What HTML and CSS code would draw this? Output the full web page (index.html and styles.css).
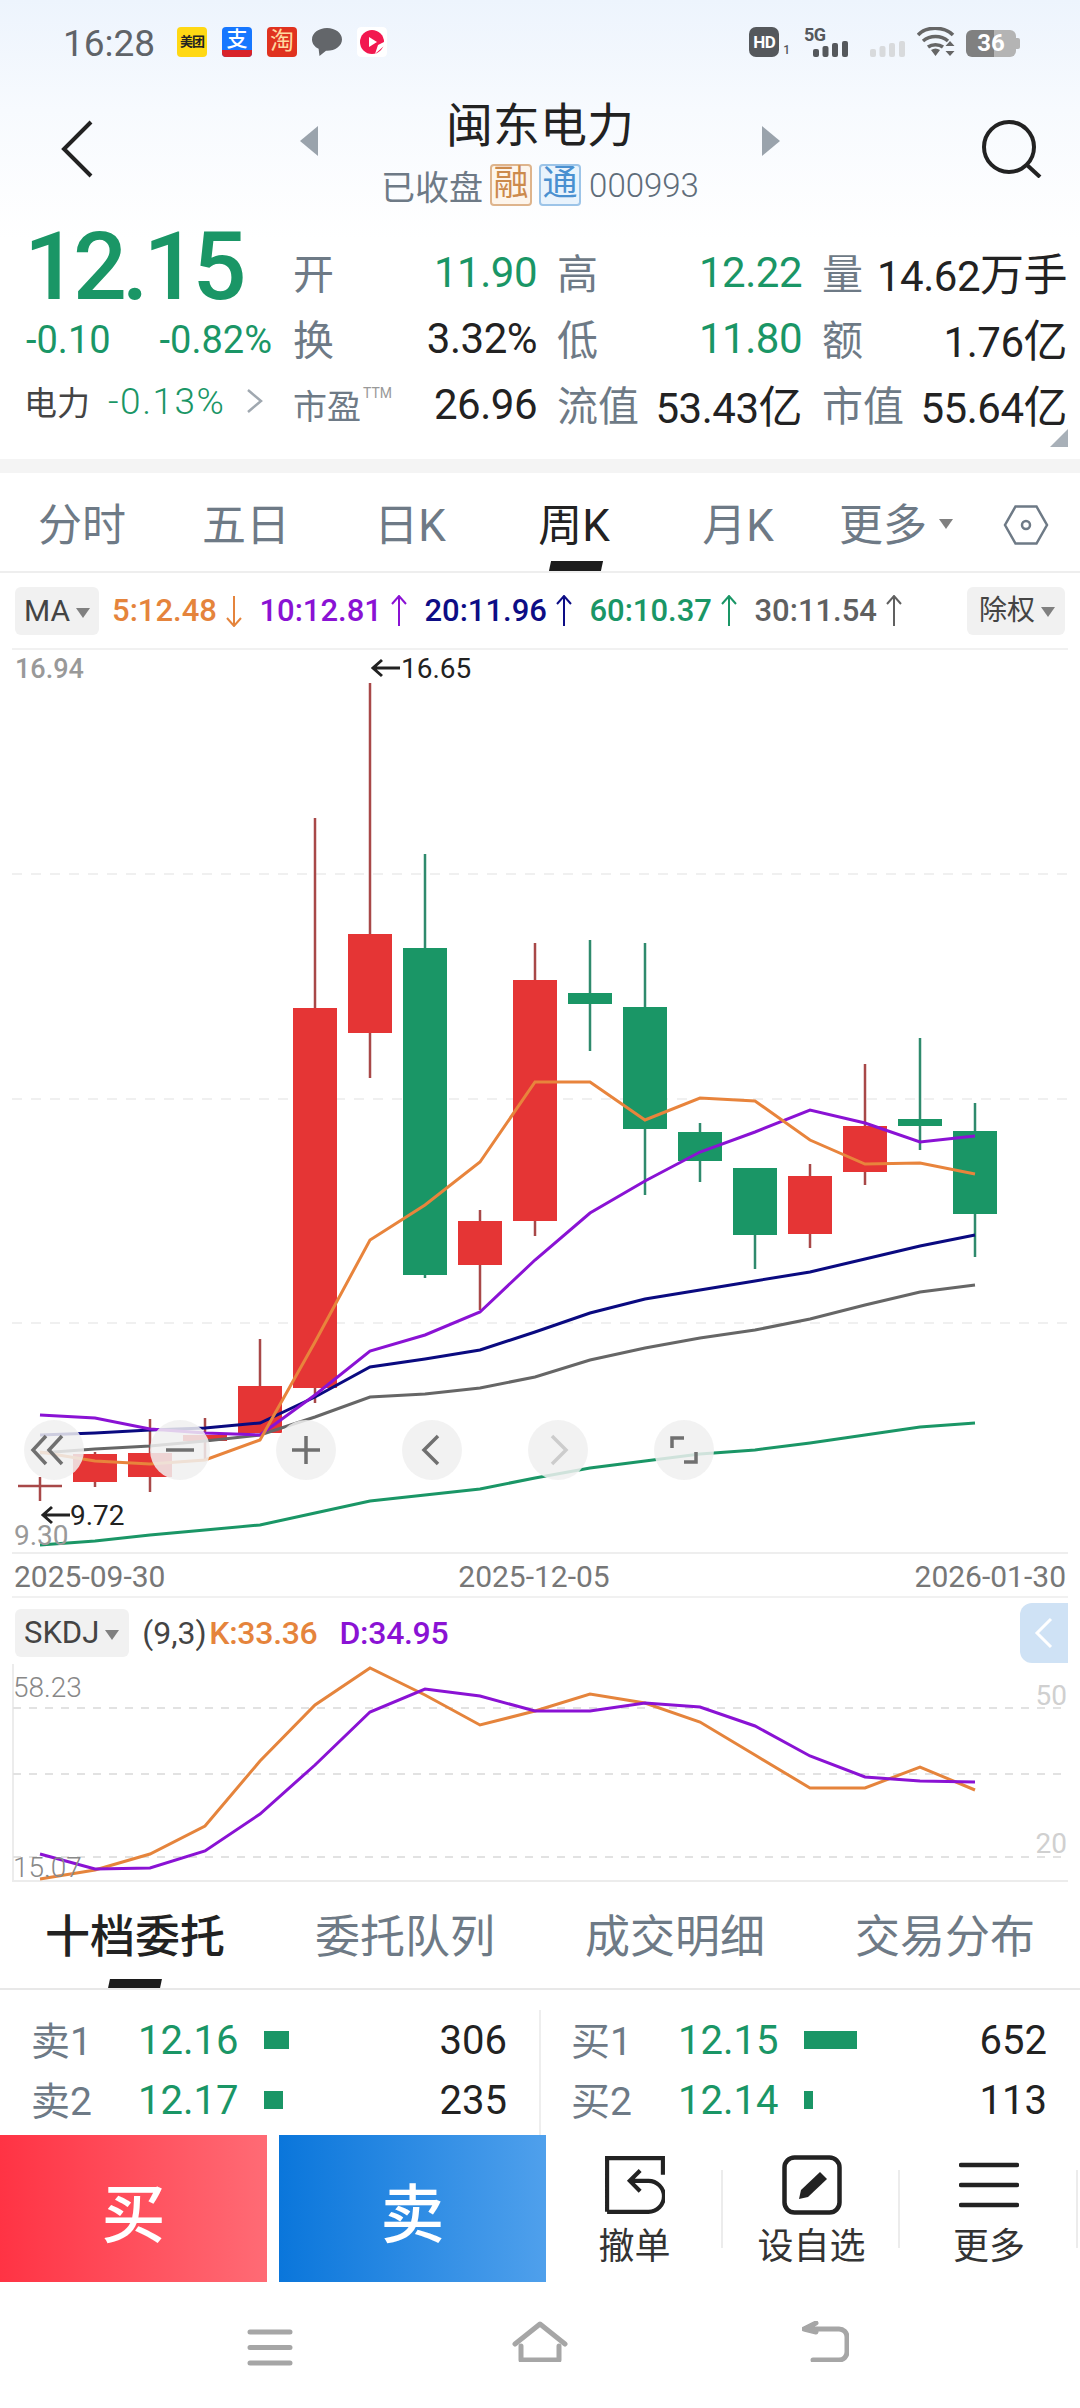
FILE: index.html
```html
<!DOCTYPE html>
<html lang="zh">
<head>
    <meta charset="utf-8">
    <title>闽东电力</title>
    <link rel="stylesheet" href="styles.css">
</head>
<body>
    <div class="page">
        <!-- 顶部行情 -->
        <header class="header">
            <div class="status">
                <span class="time">16:28</span>
                <div class="apps">
                    <span class="app app-meituan">美团</span>
                    <span class="app app-alipay"><b>支</b><i></i></span>
                    <span class="app app-taobao">淘</span>
                    <svg class="app" viewBox="0 0 30 30"><path d="M15 1C6.7 1 0 6 0 12.4c0 4 2.6 7.4 6.6 9.4L7.5 29l6.5-5.3h1C23.3 23.7 30 18.7 30 12.4S23.3 1 15 1z" fill="#63666a"/></svg>
                    <svg class="app" viewBox="0 0 30 30"><rect width="30" height="30" rx="4" fill="#fff"/><circle cx="15" cy="15" r="12" fill="#f2184f"/><path d="M27 15l-6 3-3 9 9-8z" fill="#fff"/><path d="M12 10l8 5-8 5z" fill="#fff"/></svg>
                </div>
                <div class="sys">
                    <span class="hd">HD</span>
                    <span class="sim">1</span>
                    <div class="net">
                        <span class="net-label">5G</span>
                        <svg class="bars" viewBox="0 0 35 16"><rect y="8" width="6" height="8" rx="2"/><rect x="9.5" y="5" width="6" height="11" rx="2"/><rect x="19" y="2" width="6" height="14" rx="2"/><rect x="29" width="6" height="16" rx="2"/></svg>
                    </div>
                    <svg class="bars bars-off" viewBox="0 0 35 16"><rect y="8" width="6" height="8" rx="2"/><rect x="9.5" y="5" width="6" height="11" rx="2"/><rect x="19" y="2" width="6" height="14" rx="2"/><rect x="29" width="6" height="16" rx="2"/></svg>
                    <svg class="wifi" viewBox="0 0 40 30"><path d="M1 8C9-1 27-1 36 8M6 14c7-6 18-6 25 0M11 20c4-3 11-3 15 0" fill="none" stroke="#666" stroke-width="3.5"/><path d="M14 23c3-2 6-2 9 0l-4.5 6zM33 14l4.5 5h-9zM33 29l4.5-5h-9z" fill="#666"/></svg>
                    <div class="battery"><span>36</span></div>
                </div>
            </div>

            <div class="nav">
                <div class="nav-left">
                    <svg class="icon-back" viewBox="0 0 32 58"><path d="M30 2L3 29l27 27" fill="none" stroke="#222" stroke-width="4"/></svg>
                </div>
                <svg class="tri" viewBox="0 0 18 30"><path d="M18 0v30L0 15z"/></svg>
                <div class="title-box">
                    <h1 class="title">闽东电力</h1>
                    <div class="subtitle">
                        <span>已收盘</span>
                        <span class="tag tag-rong">融</span>
                        <span class="tag tag-tong">通</span>
                        <span class="code">000993</span>
                    </div>
                </div>
                <svg class="tri" viewBox="0 0 18 30"><path d="M0 0v30l18-15z"/></svg>
                <div class="nav-right">
                    <svg class="icon-search" viewBox="0 0 60 58"><circle cx="27" cy="27" r="25" fill="none" stroke="#222" stroke-width="4"/><path d="M45 45l13 12" fill="none" stroke="#222" stroke-width="4"/></svg>
                </div>
            </div>

            <div class="quote">
                <div class="price-box">
                    <div class="price">12.15</div>
                    <div class="change"><span>-0.10</span><span>-0.82%</span></div>
                    <div class="sector">
                        <span class="sector-name">电力</span>
                        <span class="sector-pct">-0.13%</span>
                        <svg class="sector-more" viewBox="0 0 17 26"><path d="M2 2l13 11L2 24" fill="none" stroke="#a0a8b0" stroke-width="2.5"/></svg>
                    </div>
                </div>
                <div class="stats">
                    <div class="stat"><span class="lbl">开</span><span class="val green">11.90</span></div>
                    <div class="stat"><span class="lbl">高</span><span class="val green">12.22</span></div>
                    <div class="stat"><span class="lbl">量</span><span class="val">14.62<span class="unit">万手</span></span></div>
                    <div class="stat"><span class="lbl">换</span><span class="val">3.32%</span></div>
                    <div class="stat"><span class="lbl">低</span><span class="val green">11.80</span></div>
                    <div class="stat"><span class="lbl">额</span><span class="val">1.76<span class="unit">亿</span></span></div>
                    <div class="stat"><span class="lbl lbl-small">市盈<sup>TTM</sup></span><span class="val">26.96</span></div>
                    <div class="stat"><span class="lbl">流值</span><span class="val">53.43<span class="unit">亿</span></span></div>
                    <div class="stat"><span class="lbl">市值</span><span class="val">55.64<span class="unit">亿</span></span></div>
                </div>
                <span class="corner"></span>
            </div>
        </header>
        <div class="band"></div>

        <!-- 周期 -->
        <nav class="periods">
            <span class="period">分时</span>
            <span class="period">五日</span>
            <span class="period">日K</span>
            <span class="period active">周K</span>
            <span class="period">月K</span>
            <span class="period period-more">更多<i class="caret caret-tab"></i></span>
            <span class="period period-icon">
                <svg viewBox="0 0 46 42"><path d="M12.5 2.5h21L44 21 33.5 39.5h-21L2 21z" fill="none" stroke="#6e7a86" stroke-width="2.5"/><circle cx="23" cy="21" r="4" fill="none" stroke="#6e7a86" stroke-width="2.5"/></svg>
            </span>
        </nav>

        <!-- 均线 -->
        <div class="ma-row">
            <span class="pick">MA<i class="caret"></i></span>
            <div class="ma-list">
                <span class="ma c-orange">5:12.48<svg viewBox="0 0 18 32"><path d="M9 1v30M2 23l7 8 7-8"/></svg></span>
                <span class="ma c-purple">10:12.81<svg viewBox="0 0 18 32"><path d="M9 31V1M2 9l7-8 7 8"/></svg></span>
                <span class="ma c-navy">20:11.96<svg viewBox="0 0 18 32"><path d="M9 31V1M2 9l7-8 7 8"/></svg></span>
                <span class="ma c-green">60:10.37<svg viewBox="0 0 18 32"><path d="M9 31V1M2 9l7-8 7 8"/></svg></span>
                <span class="ma c-gray">30:11.54<svg viewBox="0 0 18 32"><path d="M9 31V1M2 9l7-8 7 8"/></svg></span>
            </div>
            <span class="pick pick-right">除权<i class="caret"></i></span>
        </div>

        <!-- K线图 -->
        <div class="kline">
            <svg class="kline-svg" viewBox="0 650 1080 902">
                <path class="grid" d="M12 874H1068M12 1099H1068M12 1323H1068"/>
                <path class="wick-up" d="M18 1486H62M40 1477V1501M95 1452V1487M150 1419V1492M205 1418V1460M260 1339V1390M315 818V1403M370 683V1078M480 1210V1310M535 943V1236M810 1164V1248M865 1064V1185"/>
                <path class="wick-down" d="M425 854V1278M590 940V1051M645 943V1195M700 1123V1182M755 1235V1269M920 1038V1150M975 1103V1257"/>
                <g class="up">
                    <rect x="73" y="1454" width="44" height="28"/>
                    <rect x="128" y="1453" width="44" height="24"/>
                    <rect x="183" y="1435" width="44" height="6"/>
                    <rect x="238" y="1386" width="44" height="47"/>
                    <rect x="293" y="1008" width="44" height="380"/>
                    <rect x="348" y="934" width="44" height="99"/>
                    <rect x="458" y="1221" width="44" height="44"/>
                    <rect x="513" y="980" width="44" height="241"/>
                    <rect x="788" y="1176" width="44" height="58"/>
                    <rect x="843" y="1126" width="44" height="46"/>
                </g>
                <g class="down">
                    <rect x="403" y="948" width="44" height="327"/>
                    <rect x="568" y="993" width="44" height="11"/>
                    <rect x="623" y="1007" width="44" height="122"/>
                    <rect x="678" y="1132" width="44" height="29"/>
                    <rect x="733" y="1168" width="44" height="67"/>
                    <rect x="898" y="1119" width="44" height="7"/>
                    <rect x="953" y="1131" width="44" height="83"/>
                </g>
                <polyline class="line s-green" points="40,1545 95,1541 150,1535 205,1530 260,1525 315,1513 370,1501 425,1495 480,1489 535,1478 590,1468 645,1461 700,1454 755,1450 810,1443 865,1435 920,1427 975,1423"/>
                <polyline class="line s-gray" points="40,1453 95,1449 150,1446 205,1441 260,1435 315,1417 370,1397 425,1394 480,1388 535,1377 590,1360 645,1348 700,1338 755,1330 810,1319 865,1305 920,1292 975,1285"/>
                <polyline class="line s-navy" points="40,1435 95,1433 150,1430 205,1428 260,1423 315,1397 370,1367 425,1359 480,1350 535,1332 590,1313 645,1299 700,1290 755,1281 810,1272 865,1259 920,1246 975,1235"/>
                <polyline class="line s-purple" points="40,1415 95,1418 150,1429 205,1433 260,1435 315,1395 370,1351 425,1335 480,1312 535,1260 590,1213 645,1181 700,1152 755,1132 810,1110 865,1123 920,1142 975,1136"/>
                <polyline class="line s-orange" points="40,1452 95,1461 150,1464 205,1460 260,1440 315,1342 370,1240 425,1205 480,1162 535,1082 590,1082 645,1120 700,1098 755,1101 810,1140 865,1164 920,1163 975,1174"/>
                <text class="axis axis-strong" x="15" y="678">16.94</text>
                <text class="axis" x="14" y="1545">9.30</text>
                <path class="mark" d="M400 668H373M382 660l-9 8 9 8M70 1515H43M52 1507l-9 8 9 8"/>
                <text class="peak" x="401" y="678">16.65</text>
                <text class="peak" x="70" y="1525">9.72</text>
            </svg>
            <!-- 缩放按钮 -->
            <div class="zoom-btns">
                <span class="zoom-btn"><svg viewBox="0 0 60 60"><path d="M22 16L9 30l13 14M38 16L25 30l13 14"/></svg></span>
                <span class="zoom-btn"><svg viewBox="0 0 60 60"><path d="M16 30h28"/></svg></span>
                <span class="zoom-btn"><svg viewBox="0 0 60 60"><path d="M16 30h28M30 16v28"/></svg></span>
                <span class="zoom-btn"><svg viewBox="0 0 60 60"><path d="M36 16L22 30l14 14"/></svg></span>
                <span class="zoom-btn zoom-off"><svg viewBox="0 0 60 60"><path d="M24 16l14 14-14 14"/></svg></span>
                <span class="zoom-btn"><svg viewBox="0 0 60 60"><path d="M18 28V18h12M42 32v10H30"/></svg></span>
            </div>
        </div>

        <div class="dates">
            <span>2025-09-30</span>
            <span class="date-mid">2025-12-05</span>
            <span>2026-01-30</span>
        </div>

        <!-- 副图 -->
        <div class="sub-head">
            <span class="pick pick-wide">SKDJ<i class="caret"></i></span>
            <span class="sub-args">(9,3)</span>
            <span class="sub-val c-orange">K:33.36</span>
            <span class="sub-val c-purple sub-d">D:34.95</span>
            <span class="sub-tab"><svg viewBox="0 0 20 32"><path d="M17 2L3 16l14 14" fill="none" stroke="#fff" stroke-width="3"/></svg></span>
        </div>
        <svg class="sub-svg" viewBox="0 1664 1080 224">
            <path class="sub-frame" d="M13 1664V1881H1068"/>
            <path class="sub-grid" d="M13 1708H1068M13 1774H1068M13 1857H1068"/>
            <polyline class="line s-korange" points="40,1879 95,1870 150,1854 205,1826 260,1761 315,1705 370,1668 425,1695 480,1725 535,1711 590,1694 645,1703 700,1722 755,1755 810,1788 865,1788 920,1767 975,1790"/>
            <polyline class="line s-purple" points="40,1854 95,1869 150,1868 205,1851 260,1814 315,1765 370,1712 425,1689 480,1696 535,1711 590,1711 645,1703 700,1707 755,1726 810,1756 865,1777 920,1781 975,1782"/>
            <text class="axis axis-sub" x="13" y="1697">58.23</text>
            <text class="axis axis-sub" x="13" y="1877">15.07</text>
            <text class="axis axis-right" x="1067" y="1705">50</text>
            <text class="axis axis-right" x="1067" y="1853">20</text>
        </svg>

        <!-- 盘口 -->
        <nav class="depth-tabs">
            <span class="depth-tab active">十档委托</span>
            <span class="depth-tab">委托队列</span>
            <span class="depth-tab">成交明细</span>
            <span class="depth-tab">交易分布</span>
        </nav>
        <div class="depth">
            <div class="depth-side">
                <div class="depth-row"><span class="lbl-d">卖1</span><span class="green">12.16</span><span><i class="bar" style="width:25px"></i></span><span class="qty">306</span></div>
                <div class="depth-row"><span class="lbl-d">卖2</span><span class="green">12.17</span><span><i class="bar" style="width:19px"></i></span><span class="qty">235</span></div>
            </div>
            <div class="depth-side depth-right">
                <div class="depth-row"><span class="lbl-d">买1</span><span class="green">12.15</span><span><i class="bar" style="width:53px"></i></span><span class="qty">652</span></div>
                <div class="depth-row"><span class="lbl-d">买2</span><span class="green">12.14</span><span><i class="bar" style="width:9px"></i></span><span class="qty">113</span></div>
            </div>
        </div>

        <!-- 交易按钮 -->
        <div class="trade">
            <button class="btn btn-buy">买</button>
            <button class="btn btn-sell">卖</button>
            <div class="actions">
                <div class="action">
                    <svg viewBox="0 0 58 60"><path d="M2 56V4h54v16M2 56h40a15 15 0 0 0 0-30H25M34 16l-10 10 10 10" fill="none" stroke="#222" stroke-width="4"/></svg>
                    <span>撤单</span>
                </div>
                <div class="action">
                    <svg viewBox="0 0 60 60"><rect x="2.5" y="2.5" width="55" height="55" rx="10" fill="none" stroke="#222" stroke-width="4.5"/><path d="M17 44l2-9 19-18 7 7-19 18z" fill="#222"/></svg>
                    <span>设自选</span>
                </div>
                <div class="action">
                    <svg viewBox="0 0 60 60"><path d="M2 10h56M2 30h56M2 50h56" fill="none" stroke="#222" stroke-width="4.5" stroke-linecap="round"/></svg>
                    <span>更多</span>
                </div>
            </div>
        </div>

        <!-- 系统导航 -->
        <footer class="sysnav">
            <svg class="sys-menu" viewBox="0 0 46 37"><path d="M3 3h40M3 18.5h40M3 34h40"/></svg>
            <svg class="sys-home" viewBox="0 0 56 41"><path d="M3 23L28 3l25 20M9 25v14h38V25"/></svg>
            <svg class="sys-back" viewBox="0 0 47 41"><path d="M2 8h35a8 8 0 0 1 8 8v15a8 8 0 0 1-8 8H11M14 2L2 8l12 3"/></svg>
        </footer>
    </div>
</body>
</html>
```

FILE: styles.css
```css
* {
    box-sizing: border-box;
}

body {
    margin: 0;
    background-color: #fff;
    font-family: Roboto, "Noto Sans CJK SC", sans-serif;
    color: #222;
}

.page {
    width: 1080px;
    height: 2408px;
    overflow: hidden;
    display: flex;
    flex-direction: column;
}

.green {
    color: #1a9666;
}

/* header */
.header {
    height: 459px;
    flex: none;
    background: linear-gradient(180deg, #edf4fd 0%, #f7fafe 110px, #fff 240px);
    position: relative;
}

.band {
    height: 14px;
    flex: none;
    background-color: #f4f4f4;
}

.status {
    height: 84px;
    display: flex;
    align-items: center;
    padding: 0 60px 0 63px;
}

.time {
    font-size: 37px;
    color: #5f6368;
    width: 114px;
    padding-top: 3px;
}

.apps {
    display: flex;
    gap: 15px;
}

.app {
    width: 30px;
    height: 30px;
    border-radius: 4px;
    display: block;
    overflow: hidden;
    text-align: center;
}

.app-meituan {
    background-color: #ffd814;
    font-size: 13px;
    font-weight: 700;
    line-height: 30px;
    color: #222;
    letter-spacing: -1px;
}

.app-alipay {
    background-color: #1677ff;
    color: #fff;
    font-size: 21px;
    line-height: 24px;
    position: relative;
}

.app-alipay b {
    font-weight: 500;
}

.app-alipay i {
    position: absolute;
    left: 0;
    right: 0;
    bottom: 0;
    height: 7px;
    background-color: #d8232a;
}

.app-taobao {
    background-color: #e0321f;
    color: #ffd9a0;
    font-size: 24px;
    line-height: 29px;
}

.sys {
    margin-left: auto;
    display: flex;
    align-items: flex-end;
    height: 30px;
}

.hd {
    width: 30px;
    height: 30px;
    background-color: #55585c;
    color: #fff;
    border-radius: 7px;
    font-size: 17px;
    font-weight: 700;
    line-height: 30px;
    text-align: center;
    letter-spacing: -0.5px;
}

.sim {
    font-size: 12px;
    font-weight: 500;
    color: #55585c;
    margin: 0 14px 0 4px;
    line-height: 14px;
}

.net {
    width: 44px;
    height: 30px;
    position: relative;
}

.net-label {
    display: block;
    font-size: 18px;
    font-weight: 700;
    color: #55585c;
    line-height: 15px;
    letter-spacing: -0.5px;
}

.bars {
    width: 35px;
    height: 16px;
    fill: #55585c;
}

.net .bars {
    position: absolute;
    right: 0;
    bottom: 0;
}

.bars-off {
    fill: #d8dadc;
    margin-left: 22px;
}

.wifi {
    width: 40px;
    height: 30px;
    margin-left: 12px;
}

.battery {
    width: 50px;
    height: 27px;
    margin: 0 4px 0 9px;
    border-radius: 6px;
    background: linear-gradient(90deg, #808080 55%, #b4b4b4 55%);
    color: #fff;
    font-size: 24px;
    font-weight: 700;
    line-height: 27px;
    text-align: center;
    position: relative;
}

.battery::after {
    content: "";
    position: absolute;
    left: 50px;
    top: 8px;
    width: 4px;
    height: 11px;
    border-radius: 0 2px 2px 0;
    background-color: #b4b4b4;
}

.nav {
    height: 122px;
    display: grid;
    grid-template-columns: 300px 18px 1fr 18px 300px;
    align-items: center;
}

.nav-left {
    padding-left: 61px;
    display: flex;
    padding-top: 8px;
}

.nav-right {
    padding-left: 202px;
    display: flex;
    padding-top: 7px;
}

.icon-back {
    width: 32px;
    height: 58px;
}

.icon-search {
    width: 60px;
    height: 58px;
}

.tri {
    width: 18px;
    height: 30px;
    fill: #9aa3ac;
    margin-top: -8px;
}

.title-box {
    display: flex;
    flex-direction: column;
    align-items: center;
}

.title {
    margin: 0;
    padding-top: 3px;
    font-size: 47px;
    font-weight: 400;
    line-height: 77px;
    color: #222;
}

.subtitle {
    display: flex;
    align-items: center;
    height: 42px;
    gap: 7px;
    font-size: 34px;
    color: #6e7a86;
}

.tag {
    width: 42px;
    height: 42px;
    border-radius: 4px;
    font-size: 35px;
    line-height: 36px;
    text-align: center;
    border: 2px solid;
}

.tag-rong {
    color: #cc8a4c;
    border-color: #deb48c;
    background-color: #fdf5ec;
}

.tag-tong {
    color: #4a90d0;
    border-color: #9cc4e8;
    background-color: #e9f3fc;
}

.code {
    font-size: 33px;
    font-weight: 300;
    color: #5f6d7a;
    margin-left: 1px;
}

.quote {
    display: flex;
    padding-top: 9px;
}

.price-box {
    width: 295px;
    padding: 4px 0 0 24px;
    display: flex;
    flex-direction: column;
}

.price {
    font-size: 95px;
    font-weight: 500;
    line-height: 96px;
    letter-spacing: -5px;
    color: #1a9666;
}

.change {
    display: flex;
    justify-content: space-between;
    font-size: 38px;
    line-height: 50px;
    width: 248px;
    padding-left: 2px;
    color: #1a9666;
}

.sector {
    display: flex;
    align-items: center;
    margin-top: 11px;
    height: 50px;
}

.sector-name {
    font-size: 33px;
    color: #444;
    width: 84px;
}

.sector-pct {
    font-size: 37px;
    font-weight: 300;
    letter-spacing: 1.5px;
    color: #1a9666;
    width: 138px;
}

.sector-more {
    width: 17px;
    height: 26px;
}

.stats {
    width: 773px;
    display: grid;
    grid-template-columns: 242px 243px 243px;
    column-gap: 22px;
    grid-auto-rows: 66px;
    padding-top: 24px;
}

.stat {
    display: flex;
    justify-content: space-between;
    align-items: center;
}

.lbl {
    font-size: 41px;
    line-height: 50px;
    color: #6e7a86;
    margin: 6px 0 0 -2px;
}

.lbl-small {
    font-size: 34px;
    position: relative;
    padding-right: 32px;
}

.lbl-small sup {
    position: absolute;
    left: 70px;
    top: 4px;
    font-size: 14px;
    color: #999;
    line-height: 14px;
}

.val {
    font-size: 42px;
    letter-spacing: -0.5px;
}

.unit {
    font-size: 44px;
}

.corner {
    position: absolute;
    right: 12px;
    bottom: 12px;
    width: 0;
    height: 0;
    border-style: solid;
    border-width: 0 0 18px 18px;
    border-color: transparent transparent #a8b0b8 transparent;
}

/* periods */
.periods {
    height: 100px;
    flex: none;
    display: grid;
    grid-template-columns: repeat(6, 164px) 96px;
    border-bottom: 2px solid #eeeeee;
}

.period {
    font-size: 44px;
    color: #6e7a86;
    text-align: center;
    position: relative;
    line-height: 106px;
    height: 98px;
}

.period.active {
    color: #222;
}

.period.active::after {
    content: "";
    position: absolute;
    left: 58px;
    bottom: 0;
    width: 52px;
    height: 10px;
    background-color: #1c1c1c;
    transform: skewX(-12deg);
}

.period-more {
    padding-right: 12px;
}

.period-icon {
    display: flex;
    align-items: center;
    padding-top: 6px;
}

.period-icon svg {
    width: 46px;
    height: 42px;
    margin-left: 19px;
}

.caret {
    display: inline-block;
    width: 0;
    height: 0;
    margin-left: 6px;
    border-style: solid;
    border-width: 10px 7px 0 7px;
    border-color: #808080 transparent transparent transparent;
    vertical-align: middle;
}

.caret-tab {
    margin-left: 12px;
    margin-top: -10px;
}

/* MA row */
.ma-row {
    height: 77px;
    flex: none;
    display: flex;
    align-items: center;
    border-bottom: 2px solid #f1f1f1;
    margin: 0 12px;
    padding: 0 3px;
}

.pick {
    height: 48px;
    padding: 0 9px;
    background-color: #f1f1f1;
    border-radius: 6px;
    font-size: 30px;
    line-height: 48px;
    color: #444;
    white-space: nowrap;
}

.pick-right {
    margin-left: auto;
    font-size: 28px;
    padding: 0 10px 0 12px;
}

.pick-wide {
    font-size: 31px;
    padding: 0 10px 0 9px;
}

.ma-list {
    display: flex;
    gap: 16.5px;
    margin-left: 13px;
}

.ma {
    display: flex;
    align-items: center;
    gap: 8px;
    font-size: 31px;
    font-weight: 500;
}

.ma svg {
    width: 18px;
    height: 32px;
    fill: none;
    stroke: currentColor;
    stroke-width: 2;
}

.c-orange { color: #e5843c; }
.c-purple { color: #8a12d4; }
.c-navy { color: #0d0d85; }
.c-green { color: #1a9666; }
.c-gray { color: #606060; }

/* kline */
.kline {
    position: relative;
    height: 902px;
    flex: none;
}

.kline-svg {
    display: block;
    width: 1080px;
    height: 902px;
}

.grid {
    stroke: #f0f0f0;
    stroke-width: 2;
    stroke-dasharray: 10 9;
    fill: none;
}

.wick-up {
    stroke: #a84848;
    stroke-width: 2.5;
    fill: none;
}

.wick-down {
    stroke: #2f8a6d;
    stroke-width: 2.5;
    fill: none;
}

.up rect {
    fill: #e53535;
}

.down rect {
    fill: #1a9666;
}

.line {
    fill: none;
    stroke-width: 3;
}

.s-green { stroke: #1a9666; }
.s-gray { stroke: #666; }
.s-navy { stroke: #0a0a80; }
.s-purple { stroke: #8a12d4; }
.s-orange { stroke: #e8843c; }
.s-korange { stroke: #e5843c; }

.axis {
    font-size: 28px;
    fill: #999;
}

.axis-strong {
    font-weight: 500;
    font-size: 27px;
}

.mark {
    fill: none;
    stroke: #222;
    stroke-width: 3;
}

.peak {
    font-size: 28px;
    fill: #222;
}

.zoom-btns {
    position: absolute;
    left: 24px;
    top: 770px;
    display: flex;
    gap: 66px;
}

.zoom-btn {
    width: 60px;
    height: 60px;
    border-radius: 50%;
    background-color: rgba(240, 240, 240, 0.85);
}

.zoom-btn svg {
    display: block;
    fill: none;
    stroke: #707070;
    stroke-width: 3.5;
}

.zoom-off svg {
    stroke: #cccccc;
}

/* dates */
.dates {
    height: 46px;
    flex: none;
    margin: 0 12px;
    padding: 3px 2px 0 2px;
    border-top: 2px solid #eeeeee;
    border-bottom: 2px solid #f1f1f1;
    display: flex;
    justify-content: space-between;
    align-items: center;
    font-size: 30px;
    color: #777;
}

.date-mid {
    margin-right: 12px;
}

/* sub chart */
.sub-head {
    height: 66px;
    flex: none;
    display: flex;
    align-items: center;
    padding: 4px 12px 0 15px;
    font-size: 32px;
}

.sub-args {
    margin-left: 13px;
    color: #444;
    width: 67px;
}

.sub-val {
    font-weight: 500;
    letter-spacing: -0.3px;
}

.sub-d {
    margin-left: 22px;
}

.sub-tab {
    margin-left: auto;
    width: 48px;
    height: 60px;
    background-color: #cfe2f5;
    border-radius: 12px 0 0 12px;
    display: flex;
    align-items: center;
    justify-content: center;
}

.sub-tab svg {
    width: 20px;
    height: 32px;
}

.sub-svg {
    display: block;
    flex: none;
    width: 1080px;
    height: 224px;
}

.sub-frame {
    fill: none;
    stroke: #ececec;
    stroke-width: 2;
}

.sub-grid {
    fill: none;
    stroke: #e2e2e2;
    stroke-width: 2;
    stroke-dasharray: 8 8;
}

.axis-sub {
    fill: #888;
    font-weight: 300;
}

.axis-right {
    fill: #d0d0d0;
    text-anchor: end;
}

/* depth */
.depth-tabs {
    height: 102px;
    flex: none;
    display: grid;
    grid-template-columns: repeat(4, 270px);
    border-bottom: 2px solid #e8e8e8;
}

.depth-tab {
    font-size: 45px;
    line-height: 100px;
    text-align: center;
    color: #6e7a86;
    position: relative;
}

.depth-tab.active {
    color: #222;
    font-weight: 500;
}

.depth-tab.active::after {
    content: "";
    position: absolute;
    left: 109px;
    bottom: 0;
    width: 52px;
    height: 9px;
    background-color: #1c1c1c;
    transform: skewX(-12deg);
}

.depth {
    height: 145px;
    flex: none;
    display: flex;
}

.depth-side {
    width: 540px;
    height: 125px;
    margin-top: 20px;
    padding: 0 33px 0 31px;
}

.depth-right {
    padding: 0 32px 0 30px;
    border-left: 2px solid #eeeeee;
    margin-left: -1px;
}

.depth-row {
    height: 60px;
    display: grid;
    grid-template-columns: 107px 126px 1fr auto;
    align-items: center;
    font-size: 40px;
}

.lbl-d {
    font-size: 39px;
    color: #6e7a86;
    margin-bottom: 4px;
}

.bar {
    display: block;
    height: 18px;
    background-color: #1a9666;
}

.qty {
    color: #222;
}

/* trade */
.trade {
    height: 147px;
    flex: none;
    display: flex;
    background-color: #fff;
}

.btn {
    border: none;
    padding: 0;
    color: #fff;
    font-family: inherit;
    font-size: 64px;
    font-weight: 500;
}

.btn-buy {
    width: 267px;
    margin-right: 12px;
    background: linear-gradient(90deg, #ff3344, #ff6b75);
}

.btn-sell {
    width: 267px;
    background: linear-gradient(90deg, #0a76db, #4fa0ec);
}

.actions {
    flex: 1;
    display: grid;
    grid-template-columns: 177px 177px 178px;
    align-items: start;
}

.action {
    height: 120px;
    margin-top: 19px;
    display: flex;
    flex-direction: column;
    align-items: center;
    font-size: 36px;
    line-height: 48px;
    color: #333;
    position: relative;
}

.action::after {
    content: "";
    position: absolute;
    right: 0;
    top: 16px;
    height: 78px;
    border-right: 2px solid #ececec;
}

.action svg {
    width: 60px;
    height: 62px;
    flex: none;
    margin-bottom: 7px;
}

/* system nav */
.sysnav {
    flex: 1;
    display: flex;
    align-items: flex-start;
    padding: 39px 0 0 247px;
    gap: 219px;
}

.sysnav svg {
    fill: none;
    stroke: #a6a6a6;
    stroke-width: 5;
    stroke-linecap: round;
    stroke-linejoin: round;
}

.sys-menu {
    width: 46px;
    height: 37px;
    margin-top: 8px;
}

.sys-home {
    width: 56px;
    height: 41px;
}

.sys-back {
    width: 47px;
    height: 41px;
    margin-left: 15px;
}
```
